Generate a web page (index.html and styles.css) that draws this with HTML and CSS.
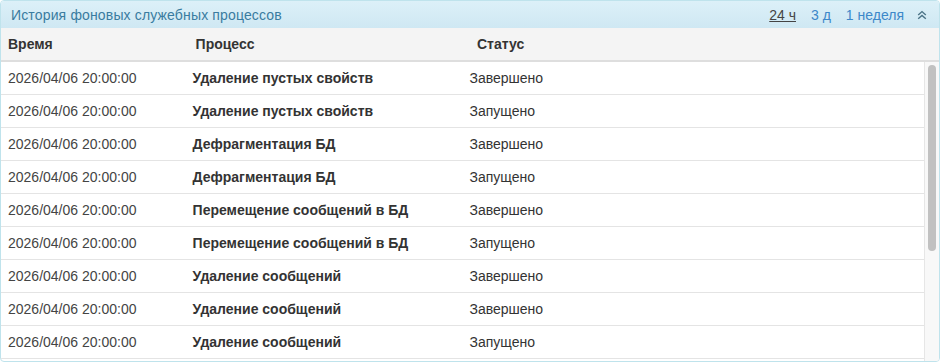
FILE: index.html
```html
<!DOCTYPE html>
<html lang="ru">
<head>
<meta charset="utf-8">
<link rel="stylesheet" href="styles.css">
</head>
<body>
<div class="panel">
  <div class="panel-head">
    <span class="title">История фоновых служебных процессов</span>
    <div class="ranges">
      <a class="range active">24 ч</a>
      <a class="range">3 д</a>
      <a class="range">1 неделя</a>
      <svg class="collapse" width="10" height="10" viewBox="0 0 10 10"><path d="M1.2 5 L5 1.6 L8.8 5 M1.2 8.8 L5 5.4 L8.8 8.8" fill="none" stroke="#4b7386" stroke-width="1.4"/></svg>
    </div>
  </div>
  <div class="thead">
    <div class="c1">Время</div>
    <div class="c2">Процесс</div>
    <div class="c3">Статус</div>
  </div>
  <div class="body">
    <div class="rows">
      <div class="row"><div class="c1 time">2026/04/06 20:00:00</div><div class="c2 proc">Удаление пустых свойств</div><div class="c3">Завершено</div></div>
      <div class="row"><div class="c1 time">2026/04/06 20:00:00</div><div class="c2 proc">Удаление пустых свойств</div><div class="c3">Запущено</div></div>
      <div class="row"><div class="c1 time">2026/04/06 20:00:00</div><div class="c2 proc">Дефрагментация БД</div><div class="c3">Завершено</div></div>
      <div class="row"><div class="c1 time">2026/04/06 20:00:00</div><div class="c2 proc">Дефрагментация БД</div><div class="c3">Запущено</div></div>
      <div class="row"><div class="c1 time">2026/04/06 20:00:00</div><div class="c2 proc">Перемещение сообщений в БД</div><div class="c3">Завершено</div></div>
      <div class="row"><div class="c1 time">2026/04/06 20:00:00</div><div class="c2 proc">Перемещение сообщений в БД</div><div class="c3">Запущено</div></div>
      <div class="row"><div class="c1 time">2026/04/06 20:00:00</div><div class="c2 proc">Удаление сообщений</div><div class="c3">Завершено</div></div>
      <div class="row"><div class="c1 time">2026/04/06 20:00:00</div><div class="c2 proc">Удаление сообщений</div><div class="c3">Завершено</div></div>
      <div class="row"><div class="c1 time">2026/04/06 20:00:00</div><div class="c2 proc">Удаление сообщений</div><div class="c3">Запущено</div></div>
    </div>
    <div class="scrollbar"><div class="thumb"></div></div>
  </div>
</div>
</body>
</html>
```

FILE: styles.css
```css
html, body {
  margin: 0;
  padding: 0;
  background: #ffffff;
}
body {
  font-family: "Liberation Sans", Arial, sans-serif;
  font-size: 14px;
  color: #333;
}
.panel {
  width: 940px;
  height: 362px;
  box-sizing: border-box;
  border: 1px solid #bfe3ec;
  border-radius: 4px;
  overflow: hidden;
  display: flex;
  flex-direction: column;
}
.panel-head {
  height: 27px;
  flex: none;
  display: flex;
  align-items: center;
  justify-content: space-between;
  padding: 0 12px 0 10px;
  background: linear-gradient(#dcf0f8, #cfe8f3);
}
.title {
  color: #3a7ca0;
  letter-spacing: 0.15px;
}
.ranges {
  display: flex;
  align-items: center;
  gap: 15px;
}
.range {
  color: #3d88c9;
  cursor: pointer;
}
.range.active {
  color: #444;
  text-decoration: underline;
}
.collapse {
  margin-left: -2px;
}
.thead {
  height: 32px;
  flex: none;
  display: flex;
  align-items: center;
  background: #f4f4f4;
  border-bottom: 2px solid #dedede;
  font-weight: bold;
  color: #333;
}
.c1, .c2, .c3 {
  box-sizing: border-box;
  padding-left: 7px;
  white-space: nowrap;
}
.c1 { width: 20%; }
.c2 { width: 30%; }
.c3 { width: 50%; }
.body {
  flex: 1;
  display: flex;
  min-height: 0;
}
.rows {
  flex: 1;
  overflow: hidden;
}
.row {
  height: 33px;
  box-sizing: border-box;
  display: flex;
  align-items: center;
  border-bottom: 1px solid #e4e4e4;
  padding-bottom: 1px;
}
.time {
  color: #444;
}
.proc {
  font-weight: bold;
  color: #333;
}
.scrollbar {
  width: 14px;
  flex: none;
  background: #f8f8f8;
  border-left: 1px solid #e6e6e6;
  padding-top: 3px;
}
.thumb {
  width: 8px;
  height: 186px;
  margin-left: 3px;
  border-radius: 4px;
  background: #c1c1c1;
}
```
